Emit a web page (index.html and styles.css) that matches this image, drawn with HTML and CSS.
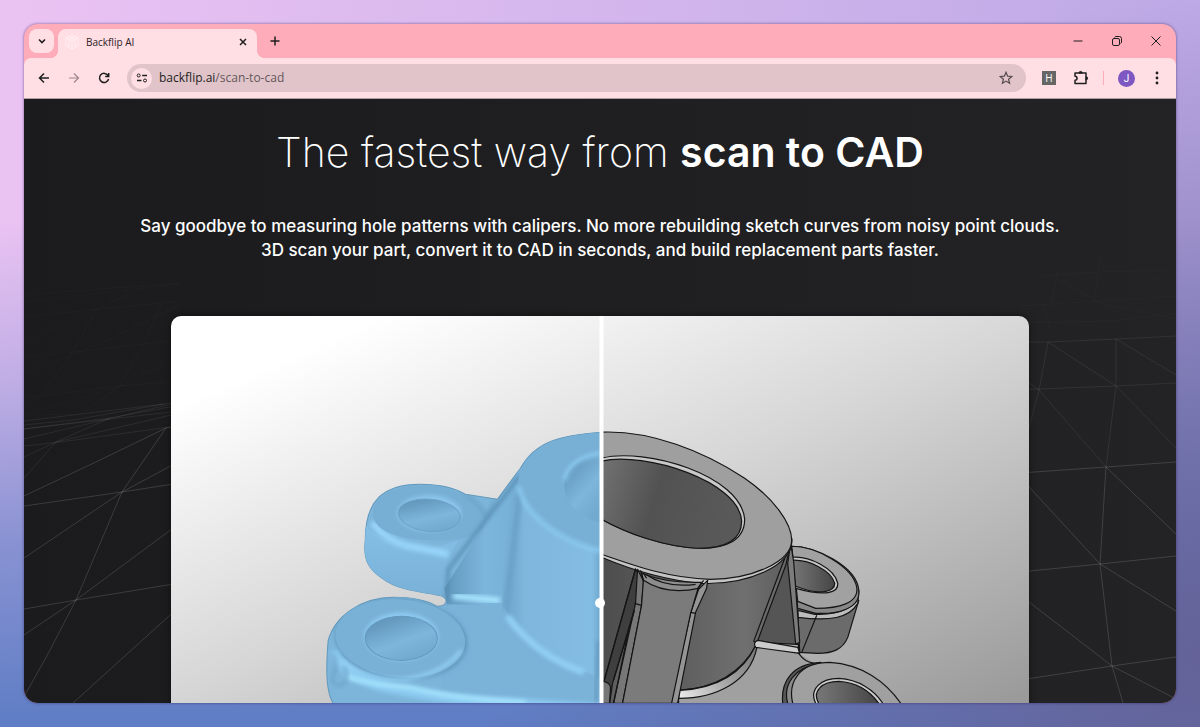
FILE: index.html
```html
<!DOCTYPE html>
<html lang="en">
<head>
  <meta charset="UTF-8" />
  <meta name="viewport" content="width=device-width, initial-scale=1.0"/>
  <title>Backflip AI</title>
  <link rel="stylesheet" href="styles.css">
</head>
<body>

<div class="window">
  <header class="tab-strip">
    <button type="button" class="tab-search" aria-label="Search tabs">
      <svg width="10" height="10" viewBox="0 0 10 10"><path d="M2 3.500l3 3 3-3" stroke-width="1.600"/></svg>
    </button>
    <div class="tab">
      <svg class="favicon" width="14" height="16" viewBox="0 0 14 16"><path d="M7 1l6 3v7.500l-6 3.500-6-3.500V4zM1 4l6 3 6-3M7 7v8M4 2.500l6 3v8M10 2.500l-6 3v8"/></svg>
      <span class="tab-title">Backflip AI</span>
      <button type="button" class="tab-close" aria-label="Close tab">
        <svg width="8" height="8" viewBox="0 0 8 8"><path d="M1 1l6 6M7 1l-6 6" stroke-width="1.500"/></svg>
      </button>
    </div>
    <button type="button" class="new-tab" aria-label="New tab">
      <svg width="10" height="10" viewBox="0 0 10 10"><path d="M5 .5v9M.5 5h9" stroke-width="1.500"/></svg>
    </button>
    <div class="window-controls">
      <button type="button" aria-label="Minimize">
        <svg width="10" height="10" viewBox="0 0 10 10"><path d="M.5 5h9"/></svg>
      </button>
      <button type="button" aria-label="Restore">
        <svg width="10" height="10" viewBox="0 0 10 10"><rect x=".5" y="2.500" width="7" height="7" rx="1.500"/><path d="M2.500 1.500Q3 .5 4 .5h3.500q2 0 2 2V6q0 1-1 1.500"/></svg>
      </button>
      <button type="button" aria-label="Close">
        <svg width="10" height="10" viewBox="0 0 10 10"><path d="M.5.5l9 9M9.500.5l-9 9"/></svg>
      </button>
    </div>
  </header>

  <nav class="toolbar">
    <button type="button" class="nav-button" aria-label="Back">
      <svg width="12" height="12" viewBox="0 0 12 12"><path d="M11 6H1.500M6 1.500L1.500 6 6 10.500" stroke-width="1.500"/></svg>
    </button>
    <button type="button" class="nav-button disabled" aria-label="Forward" disabled>
      <svg width="12" height="12" viewBox="0 0 12 12"><path d="M1 6h9.500M6 1.500L10.500 6 6 10.500" stroke-width="1.200"/></svg>
    </button>
    <button type="button" class="nav-button" aria-label="Reload">
      <svg width="12" height="12" viewBox="0 0 12 12"><path d="M10 3.500A4.600 4.600 0 1 0 10.600 7M10.700 1v3.500H7.200" stroke-width="1.500"/></svg>
    </button>
    <div class="address-bar">
      <button type="button" class="site-info" aria-label="View site information">
        <svg width="12" height="12" viewBox="0 0 12 12"><circle cx="2.700" cy="3.500" r="1.500"/><path d="M6.200 3.500H11M1 8.500h4.500" stroke-width="1.400"/><circle cx="9" cy="8.500" r="1.500"/></svg>
      </button>
      <a class="url" href="#">backflip.ai<span>/scan-to-cad</span></a>
      <button type="button" class="bookmark" aria-label="Bookmark this tab">
        <svg width="14" height="14" viewBox="0 0 14 14"><path d="M7 1.300l1.600 3.900 4.200.3-3.200 2.700 1 4.100L7 10.100l-3.600 2.200 1-4.100L1.200 5.500l4.200-.3z" stroke-width="1.200"/></svg>
      </button>
    </div>
    <button type="button" class="extension" aria-label="H extension">H</button>
    <button type="button" class="puzzle" aria-label="Extensions">
      <svg width="16" height="16" viewBox="0 0 16 16"><path d="M2 3h11v10.500H2v-3.300a2 2 0 0 0 0-4z" stroke-width="1.500" stroke-linejoin="round"/><path d="M6 3a1.600 1.600 0 0 1 3.200 0zM13 6.700a1.600 1.600 0 0 1 0 3.200z" fill="currentColor"/></svg>
    </button>
    <span class="separator"></span>
    <button type="button" class="avatar" aria-label="Profile">J</button>
    <button type="button" class="menu" aria-label="Menu">
      <svg width="4" height="14" viewBox="0 0 4 14"><circle cx="2" cy="2" r="1.400"/><circle cx="2" cy="7" r="1.400"/><circle cx="2" cy="12" r="1.400"/></svg>
    </button>
  </nav>

  <main class="page">
    <svg class="mesh" viewBox="24 99 1152 604" preserveAspectRatio="none" aria-hidden="true">
      <g class="faint">
        <path d="M24 295L60 292 180 283M24 302L180 284M24 317L60 313 180 301M24 343L94 311 145 286M24 373L100 344 180 305M24 357L75 352 143 344 180 340M24 397L40 396 120 386 180 381M24 405L41 396 73 352 95 312M24 415L119 387 143 345 164 300M24 415L81 414 119 387 180 357"/>
        <path d="M1020 306L1050 304 1176 296M1040 276L1100 272 1176 270M1050 308L1058 270M1095 301L1100 252M1060 280L1100 303 1176 319M1140 272L1176 287M1020 323L1110 321 1176 314M1050 328L1044 308"/>
      </g>
      <g class="dim">
        <path d="M24 421L180 402M24 425L73 420 164 404M24 429L110 418 180 405M24 439L180 402M24 446L60 442 170 427M24 457L56 442 110 418M24 478L56 442M24 429L180 411M56 442L180 413"/>
        <path d="M1020 342L1048 342 1116 339 1176 336M1048 342L1039 390 1029 428M1048 342L1116 386 1176 448M1116 339L1116 386M1116 339L1176 375M1020 376L1039 390 1106 467M1020 390L1039 389 1116 386 1176 383M1116 386L1106 467"/>
      </g>
      <g class="line">
        <path d="M24 496L98 461 166 428 180 425M166 428L122 492 76 600 49 652 25 695M24 506L122 492 180 483M24 558L122 492 180 461M24 609L76 600 180 583M24 635L76 600 180 523M73 703L180 606"/>
        <path d="M1020 473L1106 467 1176 462M1106 467L1176 534M1020 477L1100 564M1106 467L1100 564 1112 666 1123 703M1020 572L1100 564 1176 556M1100 564L1176 611M1020 595L1112 666 1176 699M1020 680L1112 666 1176 657"/>
      </g>
    </svg>

    <h1>The fastest way from <strong>scan to CAD</strong></h1>
    <p class="intro">Say goodbye to measuring hole patterns with calipers. No more rebuilding sketch curves from noisy point clouds.<br>3D scan your part, convert it to CAD in seconds, and build replacement parts faster.</p>

    <div class="compare">
      <svg class="render" viewBox="171 316 857 574" role="img" aria-label="Scanned mesh next to the CAD model">
        <defs>
          <linearGradient id="backdrop" gradientUnits="userSpaceOnUse" x1="171" y1="316" x2="442" y2="956">
            <stop offset="0" stop-color="#fff"/><stop offset=".12" stop-color="#fff"/><stop offset=".5" stop-color="#d6d6d6"/><stop offset="1" stop-color="#989898"/>
          </linearGradient>
          <linearGradient id="scanWall" x1="0" y1="0" x2="1" y2="0">
            <stop offset="0" stop-color="#6ca6cb"/><stop offset=".2" stop-color="#7eb6dc"/><stop offset=".9" stop-color="#84bde4"/><stop offset="1" stop-color="#6ba4ca"/>
          </linearGradient>
          <linearGradient id="scanSide" x1="0" y1="0" x2="0" y2="1">
            <stop offset="0" stop-color="#86c0e8"/><stop offset="1" stop-color="#78b0d6"/>
          </linearGradient>
          <linearGradient id="scanHole" x1="0" y1="0" x2=".6" y2="1">
            <stop offset="0" stop-color="#5a8db0"/><stop offset=".65" stop-color="#7db5db"/><stop offset="1" stop-color="#72a9ce"/>
          </linearGradient>
          <linearGradient id="scanRib" x1="0" y1="0" x2="1" y2="0">
            <stop offset="0" stop-color="#6096bb"/><stop offset=".5" stop-color="#7db6dd"/><stop offset="1" stop-color="#74aed5"/>
          </linearGradient>
          <linearGradient id="cadWall" gradientUnits="userSpaceOnUse" x1="601" y1="0" x2="790" y2="0">
            <stop offset="0" stop-color="#4d4d4d"/><stop offset=".45" stop-color="#606060"/><stop offset=".75" stop-color="#707070"/><stop offset="1" stop-color="#5c5c5c"/>
          </linearGradient>
          <linearGradient id="cadBore" x1="0" y1="0" x2="1" y2=".2">
            <stop offset="0" stop-color="#727272"/><stop offset=".45" stop-color="#525252"/><stop offset="1" stop-color="#595959"/>
          </linearGradient>
          <linearGradient id="cadHole" x1="0" y1="0" x2="1" y2="0">
            <stop offset="0" stop-color="#777"/><stop offset="1" stop-color="#454545"/>
          </linearGradient>
          <linearGradient id="cadFillet" gradientUnits="userSpaceOnUse" x1="678" y1="700" x2="756" y2="650">
            <stop offset="0" stop-color="#eee"/><stop offset=".5" stop-color="#aaa"/><stop offset="1" stop-color="#777"/>
          </linearGradient>
          <filter id="soft" x="-20%" y="-50%" width="140%" height="200%"><feGaussianBlur stdDeviation="2"/></filter>
          <clipPath id="scanHalf"><rect x="171" y="316" width="430" height="574"/></clipPath>
          <clipPath id="cadHalf"><rect x="601" y="316" width="427" height="574"/></clipPath>
          <clipPath id="scanShape"><path d="M365 540C365 500 383 484 420 484C443 484 455 488 465 494L497 499L520 468C535 441 560 435 601 432V760H350L333 703C327 693 325 676 328 640C335 615 362 597 393 597C415 597 428 601 437 606C447 606 448 599 442 596C430 592 400 592 382 578C367 568 363 558 365 540Z"/></clipPath>
        </defs>
        <rect x="171" y="316" width="857" height="574" fill="url(#backdrop)"/>

        <g clip-path="url(#scanHalf)">
          <path fill="#7db5da" stroke="#6298bc" d="M365 540C365 500 383 484 420 484C443 484 455 488 465 494L497 499L520 468C535 441 560 435 601 432V760H350L333 703C327 693 325 676 328 640C335 615 362 597 393 597C415 597 428 601 437 606C447 606 448 599 442 596C430 592 400 592 382 578C367 568 363 558 365 540Z"/>
          <g clip-path="url(#scanShape)">
            <!-- back lug -->
            <path fill="url(#scanSide)" d="M362 520Q375 545 430 549L458 540L447 560L446 600H400L360 580Z"/>
            <path fill="none" stroke="#98d5fb" stroke-width="7" filter="url(#soft)" d="M372 522Q387 543 415 547Q435 551 448 554"/>
            <path fill="#77aed3" d="M373 517C370 498 390 486 420 485C458 484 486 505 485 520C484 536 460 541 430 540C400 539 377 532 373 517Z"/>
            <path fill="none" stroke="#6197bc" stroke-width="2" filter="url(#soft)" d="M465 494Q482 504 486 517L495 500"/>
            <!-- base plate between lug and boss -->
            <path fill="#7ab2d8" d="M444 603L504 603L530 640L601 675V703H440Z"/>
            <!-- rib -->
            <path fill="url(#scanRib)" d="M520 470L444 588L447 604L500 605L514 500L525 475Z"/>
            <path fill="none" stroke="#5288ad" stroke-width="3" filter="url(#soft)" d="M519 476L448 569L446 603"/>
            <path fill="none" stroke="#a8e6ff" stroke-width="6" stroke-linecap="round" filter="url(#soft)" d="M455 596L497 600"/>
            <!-- boss wall -->
            <path fill="url(#scanWall)" d="M518 488Q550 534 601 551V677Q545 662 505 610Z"/>
            <path fill="none" stroke="#6ba3c9" stroke-width="7" filter="url(#soft)" d="M519 492L505 608"/>
            <path fill="none" stroke="#94d2f8" stroke-width="6" filter="url(#soft)" d="M507 616Q535 655 583 672"/>
            <path fill="#78afd4" d="M518 480C521 448 560 434 601 432V551C552 540 517 508 518 480Z"/>
            <path fill="none" stroke="#8ccbf2" stroke-width="4" filter="url(#soft)" d="M518 486C523 511 552 538 601 551"/>
            <path fill="url(#scanHole)" d="M601 453C575 458 563 471 564 488C566 507 582 518 601 523Z"/>
            <path fill="none" stroke="#8ccbf2" stroke-width="4" filter="url(#soft)" d="M564 480C568 463 582 456 601 453"/>
            <path fill="none" stroke="#5689ad" stroke-width="2" filter="url(#soft)" d="M598 640L595 703"/>
          </g>
          <ellipse cx="429" cy="513" rx="32" ry="18" fill="#8bc6ec" filter="url(#soft)"/>
          <ellipse cx="429" cy="515" rx="31" ry="16" fill="url(#scanHole)" stroke="#6ba1c6" transform="rotate(5 429 515)"/>
          <!-- front lug -->
          <g clip-path="url(#scanShape)">
            <path fill="none" stroke="#8dcaf1" stroke-width="10" filter="url(#soft)" d="M335 650Q342 681 402 690L455 699L600 708"/>
            <path fill="none" stroke="#a9e8ff" stroke-width="4" filter="url(#soft)" d="M346 676Q369 684 410 687Q450 698 525 702"/>
            <ellipse cx="401" cy="639" rx="66" ry="40" fill="#5d93b8" filter="url(#soft)" transform="rotate(5 401 639)"/>
            <ellipse cx="400" cy="638" rx="65" ry="39" fill="#79b0d5" transform="rotate(5 400 638)"/>
            <path fill="none" stroke="#9ad8fd" stroke-width="3" filter="url(#soft)" d="M342 660Q365 681 405 679Q444 673 461 650"/>
            <path fill="none" stroke="#659bc0" stroke-width="2" filter="url(#soft)" d="M333 653Q338 665 333 675Q329 685 342 685Q351 676 343 666"/>
          </g>
          <ellipse cx="401" cy="636" rx="37" ry="24" fill="#8dcaf1" filter="url(#soft)"/>
          <ellipse cx="401" cy="638" rx="36" ry="22" fill="url(#scanHole)" stroke="#6298bd"/>
        </g>

        <g clip-path="url(#cadHalf)" stroke="#151515" stroke-width="1.200" stroke-linejoin="round">
          <!-- base plate -->
          <path fill="#a0a0a0" stroke="none" d="M670 703L756 647L797 652L813 662L795 680L785 703V760H670Z"/>
          <!-- back lug -->
          <path fill="#6b6b6b" d="M795 595L858 600L847 637C842 649 832 653 817 653L798 652Z"/>
          <path fill="#bdbdbd" d="M797 610L814 614C840 615 857 607 858 590L857 603C848 618 829 621 797 617Z"/>
          <path fill="#888" d="M791 546C815 546 856 566 858 590C860 608 838 614 815 613L797 608Z"/>
          <path fill="#a1a1a1" d="M791 546C815 546 852 566 856 587C858 603 838 608 815 608L797 601Z"/>
          <path fill="#c6c6c6" d="M791 557C808 555 834 568 837 583C838 593 824 596 795 588Z"/>
          <path fill="url(#cadHole)" d="M791 560C808 559 830 570 834 583C834 591 820 596 795 586Z"/>
          <path fill="none" d="M816 615L801 652M797 610L799 652"/>
          <!-- boss wall -->
          <path fill="url(#cadWall)" d="M601 548L700 580L790 540L756 644C740 674 712 688 678 690V760H601Z"/>
          <path fill="url(#cadFillet)" d="M755 645C741 675 713 688 679 690L678 698C716 698 749 681 756 648Z"/>
          <!-- right rib -->
          <path fill="#555" d="M790 543L755 642L797 644Z"/>
          <path fill="#6b6b6b" d="M790 543L785 565L756 643L753 641L781 566Z"/>
          <path fill="#7c7c7c" d="M790 543L793 562L799 642L795 644L787 563Z"/>
          <path fill="#ccc" d="M757 640L797 647L799 653L755 647Q752 642 757 640Z"/>
          <path fill="none" d="M797 652C803 660 807 662 814 663"/>
          <!-- top face -->
          <path fill="#c4c4c4" d="M601 500L791 538C794 566 745 585 700 583C665 580 632 570 601 557Z"/>
          <path fill="#9f9f9f" d="M601 432C650 430 703 451 744 478C773 498 791 523 791 540C791 562 750 579 710 579C670 578 638 567 601 554Z"/>
          <path fill="#c8c8c8" d="M601 458C645 447 740 475 744 519C744 540 725 549 697 548C662 546 626 533 601 519Z"/>
          <path fill="url(#cadBore)" d="M601 461C644 451 739 481 741 521C741 541 722 548 697 548C662 546 626 533 601 519Z"/>
          <!-- front rib -->
          <path fill="#3f3f3f" d="M635 569L603 683V703H622L642 605L643 580Z"/>
          <path fill="#5f5f5f" d="M635 605L612 683L609 703H615L640 606Z"/>
          <path fill="#777" d="M637 569L643 581L641 605L622 703H613L635 603Z"/>
          <path fill="#959595" d="M707 580L698 589L690 613L670 703H677L695 612L706 588Z"/>
          <path fill="#7b7b7b" d="M643 578Q667 593 698 586L690 613L671 703H622L641 605Z"/>
          <path fill="#8d8d8d" d="M641 573Q665 583 701 582L698 588Q665 595 643 580Z"/>
          <path fill="none" d="M635 568L603 682M643 573L646 578M640 570L643 581M634 603L641 605M690 612L695 613M634 610L613 680M628 630L613 703M703 580L697 588M645 574Q665 588 695 584"/>
          <path fill="#777" d="M601 681Q609 681 610 687L609 703H601Z"/>
          <!-- front lug -->
          <path fill="#555" d="M782 703C780 682 790 664 820 662L810 760H785Z"/>
          <path fill="#8a8a8a" d="M787 703C782 684 793 667 820 663L815 760H790Z"/>
          <path fill="#a0a0a0" d="M792 703C787 682 798 662 829 662C861 664 885 681 900 703V760H800Z"/>
          <path fill="#ccc" d="M815 703C808 689 820 678 838 678C858 679 874 690 882 703V730H820Z"/>
          <path fill="url(#cadHole)" d="M818 703C811 691 821 681 838 681C857 682 870 692 878 703V730H820Z"/>
        </g>
        <rect class="divider" x="599" y="316" width="4" height="574"/>
      </svg>
      <input class="compare-slider" type="range" min="0" max="100" value="50" aria-label="Compare scan and CAD">
    </div>
  </main>
</div>

</body>
</html>
```
FILE: styles.css
```css
* {
  box-sizing: border-box;
}

body {
  margin: 0;
  height: 100vh;
  padding: 24px;
  font-family: "Open Sans", "Noto Sans", sans-serif;
  background:
    radial-gradient(ellipse 60% 90% at 100% 90%, rgba(100, 98, 152, 1), rgba(100, 98, 152, 0)),
    linear-gradient(to bottom, rgba(94, 125, 196, 0) 30%, rgba(94, 125, 196, 0.3) 52%, rgba(94, 125, 196, 0.7) 75%, rgba(94, 125, 196, 1) 100%),
    linear-gradient(to right, #ebc3f3, #bda9e6);
}

button {
  padding: 0;
  border: none;
  background: none;
  color: #1f1f1f;
  font-family: inherit;
  display: flex;
  align-items: center;
  justify-content: center;
  cursor: pointer;
}

svg {
  display: block;
}

button svg, .favicon {
  fill: none;
  stroke: currentColor;
}

.window {
  height: 100%;
  display: flex;
  flex-direction: column;
  overflow: hidden;
  border-radius: 14px;
  background: #ffacba;
  box-shadow: 0 0 3px rgba(40, 20, 80, 0.6);
}

/* tabs */
.tab-strip {
  height: 34px;
  flex-shrink: 0;
  display: flex;
  align-items: center;
  padding: 0 1px 0 5px;
}

.tab-search {
  width: 25px;
  height: 24px;
  border-radius: 8px;
  background: #ffdee4;
}

.tab {
  position: relative;
  align-self: flex-end;
  width: 199px;
  height: 29px;
  margin-left: 4px;
  padding: 0 7px 4px 7px;
  display: flex;
  align-items: center;
  gap: 7px;
  border-radius: 8px 8px 0 0;
  background: #ffdee4;
}

.tab::before, .tab::after {
  content: "";
  position: absolute;
  bottom: 0;
  width: 8px;
  height: 8px;
}

.tab::before {
  right: 100%;
  background: radial-gradient(circle at 0 0, transparent 8px, #ffdee4 8px);
}

.tab::after {
  left: 100%;
  background: radial-gradient(circle at 100% 0, transparent 8px, #ffdee4 8px);
}

.favicon {
  color: #fff0f3;
}

.tab-title {
  flex: 1;
  font-size: 10px;
  line-height: 16px;
  color: #2b2023;
}

.tab-close {
  width: 14px;
  height: 14px;
}

.new-tab {
  width: 20px;
  height: 24px;
  margin-left: 8px;
}

.window-controls {
  margin-left: auto;
  display: flex;
}

.window-controls button {
  width: 39px;
  height: 34px;
}

/* toolbar */
.toolbar {
  height: 41px;
  flex-shrink: 0;
  display: flex;
  align-items: center;
  padding: 0 16px 0 13px;
  border-radius: 7px 7px 0 0;
  border-bottom: 1px solid #b49da2;
  background: #ffdee4;
}

.nav-button {
  width: 14px;
  height: 24px;
  margin-right: 16px;
}

.nav-button.disabled {
  color: #9d878c;
}

.address-bar {
  flex: 1;
  height: 28px;
  margin-right: 16px;
  padding: 0 13px 0 4px;
  display: flex;
  align-items: center;
  gap: 7px;
  border-radius: 14px;
  background: #e0c4c9;
}

.site-info {
  width: 21px;
  height: 21px;
  border-radius: 50%;
  background: #ffdee4;
}

.url {
  flex: 1;
  font-size: 12px;
  line-height: 16px;
  color: #1f1f1f;
  text-decoration: none;
}

.url span {
  color: #65575a;
}

.bookmark {
  color: #54494b;
}

.extension {
  width: 14px;
  height: 14px;
  margin-right: 17px;
  background: #666;
  color: #fff;
  font-size: 10px;
}

.puzzle {
  width: 16px;
  margin-right: 14px;
}

.separator {
  width: 1px;
  height: 14px;
  margin-right: 14px;
  background: #ffacba;
}

.avatar {
  width: 17px;
  height: 17px;
  margin-right: 19px;
  border-radius: 50%;
  background: #7e57c2;
  color: #fff;
  font-family: Roboto, sans-serif;
  font-size: 10px;
}

.menu {
  width: 6px;
}

.menu svg {
  fill: currentColor;
  stroke: none;
}

/* page */
.page {
  position: relative;
  flex: 1;
  min-height: 0;
  overflow: hidden;
  display: flex;
  flex-direction: column;
  align-items: center;
  padding-top: 28px;
  background: linear-gradient(to right, #1b1b1d, #232325);
  color: #fff;
}

.mesh {
  position: absolute;
  inset: 0;
  width: 100%;
  height: 100%;
  fill: none;
  stroke: #fff;
}

.faint {
  opacity: 0.02;
}

.dim {
  opacity: 0.07;
}

.line {
  opacity: 0.14;
}

h1 {
  position: relative;
  margin: 0;
  font-family: Inter, sans-serif;
  font-size: 41px;
  line-height: 50px;
  font-weight: 200;
}

h1 strong {
  font-weight: 600;
}

.intro {
  position: relative;
  margin: 37px 0 0;
  font-family: Inter, sans-serif;
  font-size: 17px;
  line-height: 24px;
  font-weight: 450;
  text-align: center;
}

.compare {
  position: relative;
  flex-shrink: 0;
  width: calc(100% - 294px);
  margin-top: 54px;
  overflow: hidden;
  border-radius: 10px;
  box-shadow: 0 0 6px rgba(0, 0, 0, 0.5);
}

.render {
  width: 100%;
}

.divider {
  fill: #fff;
}

.compare-slider {
  position: absolute;
  top: 0;
  left: 0;
  width: 100%;
  height: 100%;
  margin: 0;
  appearance: none;
  background: transparent;
  cursor: ew-resize;
}

.compare-slider::-webkit-slider-thumb {
  appearance: none;
  width: 10px;
  height: 10px;
  border-radius: 50%;
  background: #fff;
}
```
